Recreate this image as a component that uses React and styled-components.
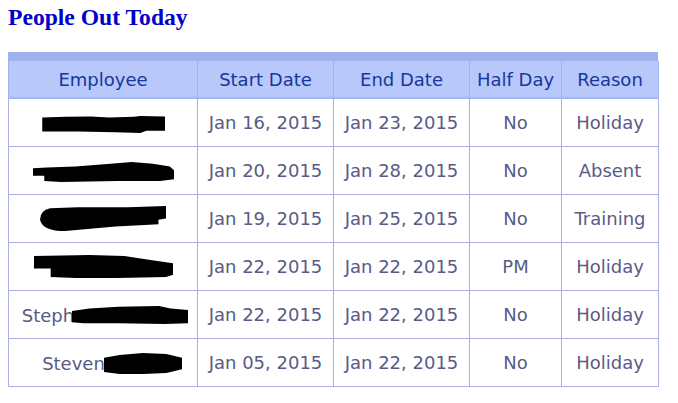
import React from "react";
import styled, { createGlobalStyle } from "styled-components";

const Global = createGlobalStyle`
  html, body { margin: 0; padding: 0; background: #ffffff; }
  body { font-family: "DejaVu Sans", Verdana, sans-serif; }
`;

const Page = styled.div`
  padding: 6px 8px 0 8px;
`;

const Title = styled.h1`
  margin: 0 0 23px 0;
  font-family: "Liberation Serif", "Times New Roman", serif;
  font-weight: bold;
  font-size: 23.6px;
  line-height: 23px;
  color: #0000cc;
`;

const Frame = styled.div`
  width: 650px;
  border-top: 9px solid #9fb1ee;
`;

const Table = styled.table`
  width: 650px;
  border-collapse: collapse;
  table-layout: fixed;
  font-family: "DejaVu Sans", Verdana, sans-serif;
  font-size: 18px;
`;

const HeadCell = styled.th`
  height: 36px;
  padding: 0;
  font-weight: normal;
  text-align: center;
  color: #17379a;
  background: #b8c8fb;
  border: 1px solid #a3b3ee;
  border-top: none;
  border-bottom: 2px solid #a6b6f0;
`;

const Cell = styled.td`
  height: 47px;
  padding: 0;
  text-align: center;
  color: #5a5a86;
  border: 1px solid #aab0e6;
  white-space: nowrap;
`;

const NameWrap = styled.span`
  display: inline-flex;
  align-items: center;
  justify-content: center;
  vertical-align: middle;
  margin-left: ${(p) => p.$offset || 0}px;
`;

const BlobSvg = styled.svg`
  display: block;
  margin-left: ${(p) => p.$shift || 0}px;
`;

const shapes = {
  a: "M1,2 L20,1 L40,0.5 L55,2 L75,1 L80,0 L100,0.5 L100,19 L85,19 L80,22 L60,21 L30,20 L1,20 Z",
  b: "M0,7 L10,6 L30,5 L55,2 L70,0 L85,2 L97,5 L100,9 L100,19 L90,21 L60,21 L20,22 L8,21 L8,15 L0,15 Z",
  c: "M8,2 Q0,4 0,12 Q2,22 20,22 L60,18 L94,16 L94,12 L100,11 L100,0 L70,1 L30,1 Z",
  d: "M0,1 L40,0 L65,1 L85,5 L100,8 L100,19 L95,21 L60,22 L30,22 L12,21 L12,13 L0,13 Z",
  e: "M0,6 L15,3 L40,1 L75,0 L85,3 L100,5 L100,21 L80,22 L40,21 L10,21 L0,20 Z",
  f: "M0,5 L20,2 L50,0 L80,1 L100,5 L100,17 L80,21 L50,22 L20,22 L0,20 Z",
};

const Blob = ({ w, h, shape, shift }) => (
  <BlobSvg
    $shift={shift}
    width={w}
    height={h}
    viewBox="0 0 100 22"
    preserveAspectRatio="none"
  >
    <path d={shapes[shape]} fill="#000" />
  </BlobSvg>
);

const rows = [
  { name: "", blob: { w: 124, h: 17, shape: "a" }, start: "Jan 16, 2015", end: "Jan 23, 2015", half: "No", reason: "Holiday" },
  { name: "", blob: { w: 141, h: 20, shape: "b" }, start: "Jan 20, 2015", end: "Jan 28, 2015", half: "No", reason: "Absent" },
  { name: "", blob: { w: 126, h: 25, shape: "c" }, start: "Jan 19, 2015", end: "Jan 25, 2015", half: "No", reason: "Training" },
  { name: "", blob: { w: 139, h: 23, shape: "d" }, start: "Jan 22, 2015", end: "Jan 22, 2015", half: "PM", reason: "Holiday" },
  { name: "Steph", offset: 4, blob: { w: 116, h: 18, shape: "e", shift: -2 }, start: "Jan 22, 2015", end: "Jan 22, 2015", half: "No", reason: "Holiday" },
  { name: "Steven", offset: 18, blob: { w: 78, h: 21, shape: "f", shift: -1 }, start: "Jan 05, 2015", end: "Jan 22, 2015", half: "No", reason: "Holiday" },
];

export default function App() {
  return (
    <Page>
      <Global />
      <Title>People Out Today</Title>
      <Frame>
        <Table>
          <colgroup>
            <col style={{ width: 189 }} />
            <col style={{ width: 136 }} />
            <col style={{ width: 136 }} />
            <col style={{ width: 92 }} />
            <col style={{ width: 97 }} />
          </colgroup>
          <thead>
            <tr>
              <HeadCell>Employee</HeadCell>
              <HeadCell>Start Date</HeadCell>
              <HeadCell>End Date</HeadCell>
              <HeadCell>Half Day</HeadCell>
              <HeadCell>Reason</HeadCell>
            </tr>
          </thead>
          <tbody>
            {rows.map((r, i) => (
              <tr key={i}>
                <Cell>
                  <NameWrap $offset={r.offset}>
                    {r.name && <span>{r.name}</span>}
                    <Blob {...r.blob} />
                  </NameWrap>
                </Cell>
                <Cell>{r.start}</Cell>
                <Cell>{r.end}</Cell>
                <Cell>{r.half}</Cell>
                <Cell>{r.reason}</Cell>
              </tr>
            ))}
          </tbody>
        </Table>
      </Frame>
    </Page>
  );
}
